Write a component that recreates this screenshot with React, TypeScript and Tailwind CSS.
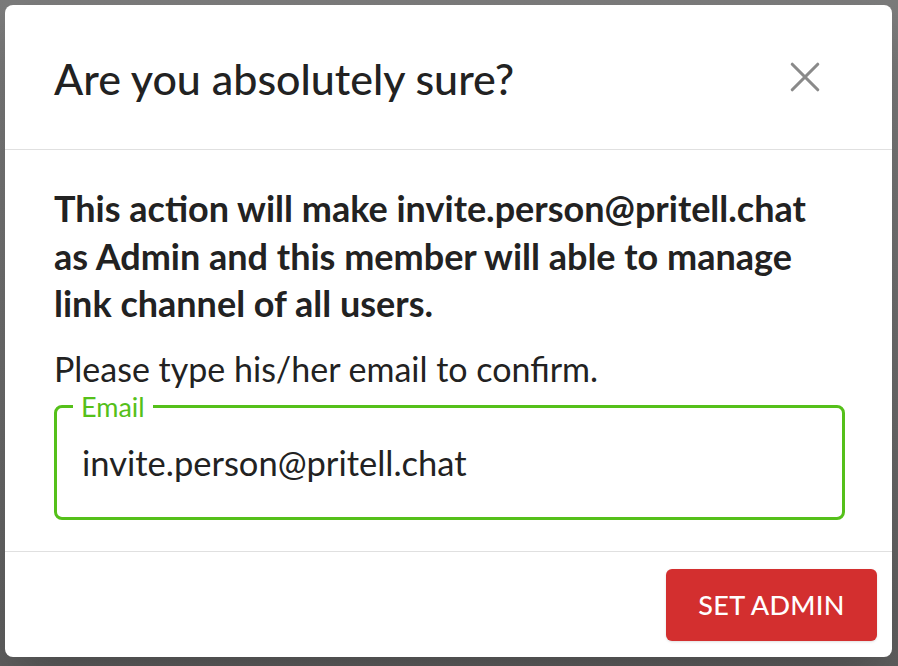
import React from "react";

// Confirmation dialog: promote a member to Admin after retyping their email.

const EMAIL = "invite.person@pritell.chat";

function CloseIcon() {
  return (
    <svg width="34" height="34" viewBox="0 0 24 24" className="text-[#8a8a8a]">
      <path d="M3 3 L21 21 M21 3 L3 21" stroke="currentColor" strokeWidth="2.2" strokeLinecap="round" fill="none" />
    </svg>
  );
}

export default function App() {
  return (
    <div className="w-[898px] h-[666px] overflow-hidden bg-gradient-to-b from-[#7b7b7b] to-[#5e5e5e] p-[5px] font-['Lato','Noto_Sans',sans-serif]">
      <div className="h-[652px] w-[887px] bg-white rounded-lg shadow-2xl flex flex-col">
        <header className="h-[145px] flex items-center justify-between pl-[49px] pr-[70px] border-b border-[#e0e0e0]">
          <h2 className="text-[43px] leading-[50px] text-[#222] font-medium pt-[4px]">Are you absolutely sure?</h2>
          <button className="flex items-center justify-center">
            <CloseIcon />
          </button>
        </header>

        <main className="flex-1 pl-[49px] pr-[70px] pt-[35px] border-b border-[#e0e0e0]">
          <p className="text-[36px] leading-[47.5px] font-bold text-[#222]">
            This action will make {EMAIL} as Admin and this member will able to manage link channel of all users.
          </p>
          <p className="mt-[21px] text-[34px] leading-[40px] text-[#222]">Please type his/her email to confirm.</p>
          <fieldset className="mt-[8px] w-[791px] h-[123px] border-[3px] border-[#55c01a] rounded-lg px-[16px]">
            <legend className="px-[8px] text-[27px] leading-[20px] text-[#55c01a]">Email</legend>
            <div className="pt-[26px] pl-[9px] text-[34.5px] leading-[40px] text-[#222]">{EMAIL}</div>
          </fieldset>
        </main>

        <footer className="h-[105px] flex items-start justify-end pt-[17px] pr-[15px]">
          <button className="w-[211px] h-[72px] rounded-md bg-[#d32f2f] text-white text-[27px] font-medium tracking-[0.01em] shadow">
            SET ADMIN
          </button>
        </footer>
      </div>
    </div>
  );
}
